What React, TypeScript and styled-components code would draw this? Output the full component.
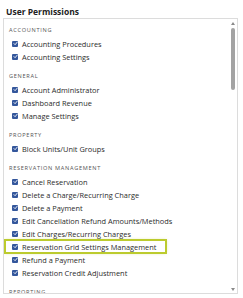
import styled, { createGlobalStyle } from "styled-components";

const Global = createGlobalStyle`
  body {
    margin: 0;
    background: #fff;
    font-family: "Open Sans", "Liberation Sans", sans-serif;
    color: #2b2b2b;
  }
`;

const Panel = styled.div`
  width: 243px;
  height: 298px;
  padding: 5px 0 0 3px;
  box-sizing: border-box;
  overflow: hidden;
`;

const Title = styled.h2`
  margin: 0 0 0 3px;
  font-size: 8.5px;
  line-height: 13px;
  font-weight: 700;
  color: #222;
`;

const Box = styled.div`
  display: flex;
  width: 235px;
  height: 276px;
  border: 1px solid #dcdcdc;
  box-sizing: border-box;
  overflow: hidden;
`;

const List = styled.div`
  flex: 1;
  padding: 5px 0 0 1px;
  display: flex;
  flex-direction: column;
  gap: 7px;
  overflow: hidden;
`;

const Section = styled.div`
  display: flex;
  flex-direction: column;
`;

const Heading = styled.div`
  padding-left: 4px;
  height: 13px;
  line-height: 13px;
  font-size: 5.6px;
  letter-spacing: 0.7px;
  color: #555;
  text-transform: uppercase;
`;

const Row = styled.label<{ $highlight?: boolean }>`
  display: flex;
  align-items: center;
  gap: 4px;
  height: 13px;
  width: fit-content;
  padding: 0 10px 0 7px;
  font-size: 7.4px;
  color: #2b2b2b;
  outline: ${(p) => (p.$highlight ? "2px solid #bccb2e" : "none")};
  outline-offset: -1px;
  box-shadow: ${(p) =>
    p.$highlight ? "0 0 3px rgba(190, 205, 60, 0.6)" : "none"};
`;

const Check = styled.span`
  display: flex;
  align-items: center;
  justify-content: center;
  width: 6px;
  height: 6px;
  border-radius: 1px;
  background: #34579c;
  flex-shrink: 0;
`;

const ScrollTrack = styled.div`
  width: 9px;
  display: flex;
  flex-direction: column;
  align-items: center;
  padding: 3px 0 2px;
  box-sizing: border-box;
`;

const Arrow = styled.div<{ $down?: boolean }>`
  width: 0;
  height: 0;
  border-left: 2.5px solid transparent;
  border-right: 2.5px solid transparent;
  ${(p) =>
    p.$down
      ? "border-top: 3px solid #8a8a8a;"
      : "border-bottom: 3px solid #8a8a8a;"}
`;

const Thumb = styled.div`
  width: 4px;
  height: 62px;
  margin-top: 3px;
  border-radius: 2px;
  background: #a3a3a3;
`;

const Spacer = styled.div`
  flex: 1;
`;

const CheckIcon = () => (
  <svg width="5" height="5" viewBox="0 0 10 10">
    <path
      d="M2 5.2 L4.2 7.4 L8.2 2.6"
      fill="none"
      stroke="#fff"
      strokeWidth="1.8"
      strokeLinecap="round"
      strokeLinejoin="round"
    />
  </svg>
);

const sections: { title: string; items: string[] }[] = [
  { title: "Accounting", items: ["Accounting Procedures", "Accounting Settings"] },
  {
    title: "General",
    items: ["Account Administrator", "Dashboard Revenue", "Manage Settings"],
  },
  { title: "Property", items: ["Block Units/Unit Groups"] },
  {
    title: "Reservation Management",
    items: [
      "Cancel Reservation",
      "Delete a Charge/Recurring Charge",
      "Delete a Payment",
      "Edit Cancellation Refund Amounts/Methods",
      "Edit Charges/Recurring Charges",
      "Reservation Grid Settings Management",
      "Refund a Payment",
      "Reservation Credit Adjustment",
    ],
  },
  { title: "Reporting", items: [] },
];

const highlighted = "Reservation Grid Settings Management";

export default function App() {
  return (
    <>
      <Global />
      <Panel>
        <Title>User Permissions</Title>
        <Box>
          <List>
            {sections.map((s) => (
              <Section key={s.title}>
                <Heading>{s.title}</Heading>
                {s.items.map((item) => (
                  <Row key={item} $highlight={item === highlighted}>
                    <Check>
                      <CheckIcon />
                    </Check>
                    {item}
                  </Row>
                ))}
              </Section>
            ))}
          </List>
          <ScrollTrack>
            <Arrow />
            <Thumb />
            <Spacer />
            <Arrow $down />
          </ScrollTrack>
        </Box>
      </Panel>
    </>
  );
}
